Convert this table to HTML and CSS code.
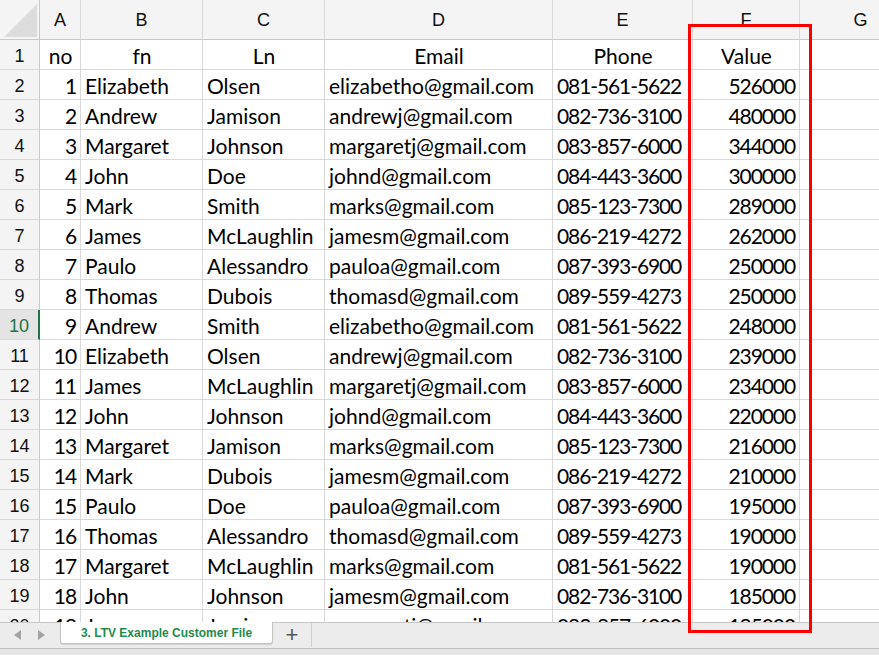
FILE: index.html
```html
<!DOCTYPE html>
<html>
<head>
<meta charset="utf-8">
<link rel="stylesheet" href="styles.css">
</head>
<body>
<div class="app">
  <div class="viewport">
    <div class="sheet">
      <div class="corner"><svg width="40" height="40" viewBox="0 0 40 40"><polygon points="4,37 37,37 37,4" fill="#dcdcdc"/></svg></div>
      <div class="ch">A</div><div class="ch">B</div><div class="ch">C</div><div class="ch">D</div><div class="ch">E</div><div class="ch">F</div><div class="ch">G</div>

      <div class="rh">1</div><div class="h">no</div><div class="h">fn</div><div class="h">Ln</div><div class="h">Email</div><div class="h">Phone</div><div class="h">Value</div><div class="e"></div>
      <div class="rh">2</div><div class="n">1</div><div class="t">Elizabeth</div><div class="t">Olsen</div><div class="t">elizabetho@gmail.com</div><div class="p">081-561-5622</div><div class="n">526000</div><div class="e"></div>
      <div class="rh">3</div><div class="n">2</div><div class="t">Andrew</div><div class="t">Jamison</div><div class="t">andrewj@gmail.com</div><div class="p">082-736-3100</div><div class="n">480000</div><div class="e"></div>
      <div class="rh">4</div><div class="n">3</div><div class="t">Margaret</div><div class="t">Johnson</div><div class="t">margaretj@gmail.com</div><div class="p">083-857-6000</div><div class="n">344000</div><div class="e"></div>
      <div class="rh">5</div><div class="n">4</div><div class="t">John</div><div class="t">Doe</div><div class="t">johnd@gmail.com</div><div class="p">084-443-3600</div><div class="n">300000</div><div class="e"></div>
      <div class="rh">6</div><div class="n">5</div><div class="t">Mark</div><div class="t">Smith</div><div class="t">marks@gmail.com</div><div class="p">085-123-7300</div><div class="n">289000</div><div class="e"></div>
      <div class="rh">7</div><div class="n">6</div><div class="t">James</div><div class="t">McLaughlin</div><div class="t">jamesm@gmail.com</div><div class="p">086-219-4272</div><div class="n">262000</div><div class="e"></div>
      <div class="rh">8</div><div class="n">7</div><div class="t">Paulo</div><div class="t">Alessandro</div><div class="t">pauloa@gmail.com</div><div class="p">087-393-6900</div><div class="n">250000</div><div class="e"></div>
      <div class="rh">9</div><div class="n">8</div><div class="t">Thomas</div><div class="t">Dubois</div><div class="t">thomasd@gmail.com</div><div class="p">089-559-4273</div><div class="n">250000</div><div class="e"></div>
      <div class="rh sel">10</div><div class="n">9</div><div class="t">Andrew</div><div class="t">Smith</div><div class="t">elizabetho@gmail.com</div><div class="p">081-561-5622</div><div class="n">248000</div><div class="e"></div>
      <div class="rh">11</div><div class="n">10</div><div class="t">Elizabeth</div><div class="t">Olsen</div><div class="t">andrewj@gmail.com</div><div class="p">082-736-3100</div><div class="n">239000</div><div class="e"></div>
      <div class="rh">12</div><div class="n">11</div><div class="t">James</div><div class="t">McLaughlin</div><div class="t">margaretj@gmail.com</div><div class="p">083-857-6000</div><div class="n">234000</div><div class="e"></div>
      <div class="rh">13</div><div class="n">12</div><div class="t">John</div><div class="t">Johnson</div><div class="t">johnd@gmail.com</div><div class="p">084-443-3600</div><div class="n">220000</div><div class="e"></div>
      <div class="rh">14</div><div class="n">13</div><div class="t">Margaret</div><div class="t">Jamison</div><div class="t">marks@gmail.com</div><div class="p">085-123-7300</div><div class="n">216000</div><div class="e"></div>
      <div class="rh">15</div><div class="n">14</div><div class="t">Mark</div><div class="t">Dubois</div><div class="t">jamesm@gmail.com</div><div class="p">086-219-4272</div><div class="n">210000</div><div class="e"></div>
      <div class="rh">16</div><div class="n">15</div><div class="t">Paulo</div><div class="t">Doe</div><div class="t">pauloa@gmail.com</div><div class="p">087-393-6900</div><div class="n">195000</div><div class="e"></div>
      <div class="rh">17</div><div class="n">16</div><div class="t">Thomas</div><div class="t">Alessandro</div><div class="t">thomasd@gmail.com</div><div class="p">089-559-4273</div><div class="n">190000</div><div class="e"></div>
      <div class="rh">18</div><div class="n">17</div><div class="t">Margaret</div><div class="t">McLaughlin</div><div class="t">marks@gmail.com</div><div class="p">081-561-5622</div><div class="n">190000</div><div class="e"></div>
      <div class="rh">19</div><div class="n">18</div><div class="t">John</div><div class="t">Johnson</div><div class="t">jamesm@gmail.com</div><div class="p">082-736-3100</div><div class="n">185000</div><div class="e"></div>
      <div class="rh">20</div><div class="n">19</div><div class="t">James</div><div class="t">Jamison</div><div class="t">margaretj@gmail.com</div><div class="p">083-857-6000</div><div class="n">185000</div><div class="e"></div>
    </div>
  </div>
  <div class="tabbar">
    <div class="navs">
      <svg width="12" height="12" viewBox="0 0 12 12"><polygon points="9,1 9,11 2,6" fill="#a3a3a3"/></svg>
      <svg width="12" height="12" viewBox="0 0 12 12"><polygon points="3,1 3,11 10,6" fill="#a3a3a3"/></svg>
    </div>
    <div class="tab">3. LTV Example Customer File</div>
    <div class="add">+</div>
  </div>
  <div class="status"></div>
  <div class="highlight"></div>
</div>
</body>
</html>
```

FILE: styles.css
```css
html, body {
  margin: 0;
  padding: 0;
  background: #ffffff;
  overflow: hidden;
}
.app {
  position: relative;
  width: 879px;
  height: 655px;
  display: flex;
  flex-direction: column;
  overflow: hidden;
}
.viewport {
  height: 622px;
  overflow: hidden;
  flex: none;
}
.sheet {
  display: grid;
  grid-template-columns: 40px 41px 122px 122px 228px 140px 107px 122px;
  grid-template-rows: 40px;
  grid-auto-rows: 30px;
  width: 922px;
}
.sheet > div {
  box-sizing: border-box;
  border-right: 1px solid #d9d9d9;
  border-bottom: 1px solid #d9d9d9;
  white-space: nowrap;
  overflow: hidden;
}
.corner {
  background: #f4f4f4;
  border-color: #c9c9c9 !important;
}
.corner svg { display: block; }
.ch {
  background: #f4f4f4;
  font-family: "Liberation Sans", Arial, sans-serif;
  font-size: 18px;
  color: #111;
  text-align: center;
  padding-top: 2px;
  line-height: 37px;
  border-bottom-color: #c9c9c9 !important;
}
.rh {
  background: #f4f4f4;
  font-family: "Liberation Sans", Arial, sans-serif;
  font-size: 18px;
  color: #111;
  text-align: center;
  padding-top: 4px;
  line-height: 25px;
  border-right-color: #c9c9c9 !important;
}
.rh.sel {
  background: #e4e4e4;
  color: #217346;
  border-right: 2px solid #217346 !important;
}
.t, .n, .h, .e, .p {
  font-family: Lato, "Noto Sans", sans-serif;
  font-size: 21px;
  color: #000;
  padding: 2px 3px 0 4px;
  line-height: 27px;
}
.p { letter-spacing: -1.1px; }
.n {
  text-align: right;
  letter-spacing: -1.1px;
  padding-right: 4px;
}
.h { text-align: center; }
.highlight {
  position: absolute;
  left: 688px;
  top: 24px;
  width: 124px;
  height: 609px;
  box-sizing: border-box;
  border: 3px solid #ff0000;
}
.tabbar {
  flex: none;
  height: 25px;
  background: #ececec;
  border-top: 1px solid #c8c8c8;
  display: flex;
  align-items: flex-start;
}
.navs {
  width: 60px;
  height: 24px;
  display: flex;
  align-items: center;
  gap: 11px;
  padding-left: 12px;
  box-sizing: border-box;
}
.navs svg { display: block; }
.tab {
  width: 213px;
  height: 22px;
  margin-top: -1px;
  box-sizing: border-box;
  background: #ffffff;
  border: 1px solid #c4c4c4;
  border-top: none;
  border-radius: 0 0 3px 3px;
  box-shadow: 0 1px 1px rgba(0,0,0,0.12);
  font-family: "Liberation Sans", Arial, sans-serif;
  font-weight: bold;
  font-size: 12px;
  color: #1f8a4e;
  text-align: center;
  line-height: 22px;
}
.add {
  width: 39px;
  height: 24px;
  box-sizing: border-box;
  border-right: 1px solid #cfcfcf;
  font-family: "Liberation Sans", Arial, sans-serif;
  font-size: 22px;
  color: #555;
  text-align: center;
  line-height: 24px;
}
.status {
  flex: 1;
  background: #e6e6e6;
  border-top: 1px solid #bdbdbd;
}
```
